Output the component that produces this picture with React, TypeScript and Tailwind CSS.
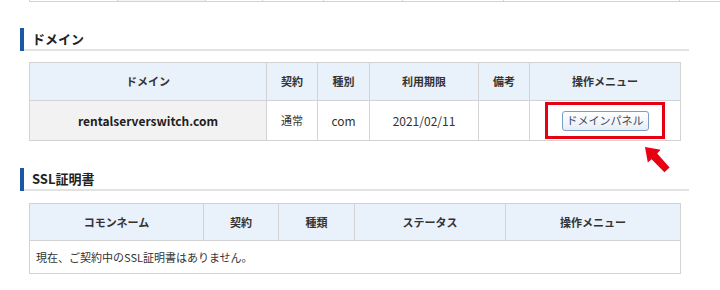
import React from "react";

type Col = { label: string; w: string };

const domainCols: Col[] = [
    { label: "ドメイン", w: "w-[237px]" },
    { label: "契約", w: "w-[51px]" },
    { label: "種別", w: "w-[52px]" },
    { label: "利用期限", w: "w-[109px]" },
    { label: "備考", w: "w-[51px]" },
    { label: "操作メニュー", w: "w-[151px]" },
];

const sslCols: Col[] = [
    { label: "コモンネーム", w: "w-[174px]" },
    { label: "契約", w: "w-[75px]" },
    { label: "種類", w: "w-[76px]" },
    { label: "ステータス", w: "w-[151px]" },
    { label: "操作メニュー", w: "w-[175px]" },
];

// widths of the table that is cut off at the top of the picture
const topCols = ["w-[88px]", "w-[88px] bg-[#f4f4f4]", "w-[57px]", "w-[61px]", "w-[79px]", "w-[101px]", "w-[177px]"];

function SectionTitle({ children }: { children: React.ReactNode }) {
    return (
        <div className="ml-[20px] w-[669px] h-[23px] flex items-stretch">
            <div className="w-[4px] bg-[#1b57a3]" />
            <div className="flex-1 flex items-center pl-[8px] border-b-2 border-[#e2e2e2] text-[13px] font-bold text-[#222] leading-none">
                {children}
            </div>
        </div>
    );
}

const cell = "border border-[#d3d3d3] text-center align-middle";

export default function App() {
    return (
        <div className="relative w-[720px] h-[290px] bg-white overflow-hidden font-['Noto_Sans_CJK_JP',sans-serif] text-[#333]">
            {/* bottom edge of the table above */}
            <div className="ml-[29px] flex h-[2px] border-b border-[#d3d3d3]">
                {topCols.map((c, i) => (
                    <div key={i} className={`${c} border-l border-[#d3d3d3] last:border-r`} />
                ))}
            </div>

            <div className="mt-[26px]">
                <SectionTitle>ドメイン</SectionTitle>
            </div>

            <table className="ml-[29px] mt-[11px] table-fixed border-collapse text-[11px]">
                <thead>
                    <tr className="h-[38px] bg-[#e9f1fa]">
                        {domainCols.map((c) => (
                            <th key={c.label} className={`${cell} ${c.w} font-bold`}>
                                {c.label}
                            </th>
                        ))}
                    </tr>
                </thead>
                <tbody>
                    <tr className="h-[40px]">
                        <td className={`${cell} bg-[#f2f2f2] text-[12px] font-bold text-[#1e1e1e]`}>
                            rentalserverswitch.com
                        </td>
                        <td className={cell}>通常</td>
                        <td className={`${cell} text-[12px]`}>com</td>
                        <td className={`${cell} text-[12px]`}>2021/02/11</td>
                        <td className={cell}></td>
                        <td className={cell}>
                            <div className="mx-auto w-[120px] h-[37px] border-[3px] border-[#e60012] flex items-center justify-center">
                                <button
                                    type="button"
                                    className="w-[87px] h-[20px] rounded-[3px] border border-[#7d9dc9] bg-gradient-to-b from-white to-[#e9eef5] text-[11px] text-[#3a4a5e] leading-none"
                                >
                                    ドメインパネル
                                </button>
                            </div>
                        </td>
                    </tr>
                </tbody>
            </table>

            <div className="mt-[27px]">
                <SectionTitle>SSL証明書</SectionTitle>
            </div>

            <table className="ml-[29px] mt-[12px] table-fixed border-collapse text-[11px]">
                <thead>
                    <tr className="h-[37px] bg-[#e9f1fa]">
                        {sslCols.map((c) => (
                            <th key={c.label} className={`${cell} ${c.w} font-bold`}>
                                {c.label}
                            </th>
                        ))}
                    </tr>
                </thead>
                <tbody>
                    <tr className="h-[33px]">
                        <td colSpan={5} className="border border-[#d3d3d3] text-left pl-[6px] align-middle">
                            現在、ご契約中のSSL証明書はありません。
                        </td>
                    </tr>
                </tbody>
            </table>

            {/* annotation arrow */}
            <svg className="absolute left-[642px] top-[144px]" width="30" height="32" viewBox="0 0 30 32">
                <polygon
                    points="3,3 18.6,5.8 15.2,9.6 27.6,23.4 22.4,28.2 9.6,15.2 5.8,18.6"
                    fill="#e60012"
                />
            </svg>
        </div>
    );
}
